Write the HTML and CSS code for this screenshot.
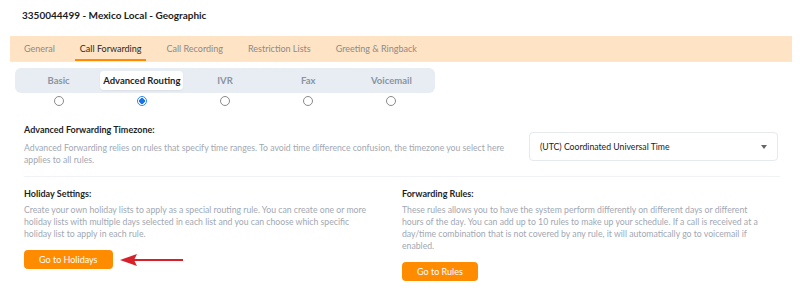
FILE: index.html
```html
<!DOCTYPE html>
<html lang="en">
<head>
    <meta charset="UTF-8">
    <title>3350044499 - Mexico Local - Geographic</title>
    <link rel="stylesheet" href="styles.css">
</head>
<body>

    <h1 class="title">3350044499 - Mexico Local - Geographic</h1>

    <nav class="tabs">
        <a href="#general">General</a>
        <a href="#forwarding" class="active">Call Forwarding</a>
        <a href="#recording">Call Recording</a>
        <a href="#restriction">Restriction Lists</a>
        <a href="#greeting">Greeting &amp; Ringback</a>
    </nav>

    <div class="modes">
        <div class="segments">
            <span>Basic</span>
            <span class="active">Advanced Routing</span>
            <span>IVR</span>
            <span>Fax</span>
            <span>Voicemail</span>
        </div>
        <div class="radios">
            <span><i class="radio"></i></span>
            <span><i class="radio checked"></i></span>
            <span><i class="radio"></i></span>
            <span><i class="radio"></i></span>
            <span><i class="radio"></i></span>
        </div>
    </div>

    <div class="content">
        <div class="timezone">
            <div class="timezone-text">
                <h3>Advanced Forwarding Timezone:</h3>
                <p>Advanced Forwarding relies on rules that specify time ranges. To avoid time difference confusion, the timezone you select here applies to all rules.</p>
            </div>
            <div class="select">
                <span>(UTC) Coordinated Universal Time</span>
                <i class="caret"></i>
            </div>
        </div>

        <div class="columns">
            <div class="col col-holiday">
                <h3>Holiday Settings:</h3>
                <p>Create your own holiday lists to apply as a special routing rule. You can create one or more holiday lists with multiple days selected in each list and you can choose which specific holiday list to apply in each rule.</p>
                <div class="action">
                    <button class="btn">Go to Holidays</button>
                    <svg class="arrow" width="64" height="14" viewBox="0 0 64 14">
                        <line x1="14" y1="7" x2="63" y2="7" stroke="#d8202b" stroke-width="2"/>
                        <polygon points="0,7 17,1 14,7 17,13" fill="#d8202b"/>
                    </svg>
                </div>
            </div>
            <div class="col">
                <h3>Forwarding Rules:</h3>
                <p>These rules allows you to have the system perform differently on different days or different hours of the day. You can add up to 10 rules to make up your schedule. If a call is received at a day/time combination that is not covered by any rule, it will automatically go to voicemail if enabled.</p>
                <div class="action">
                    <button class="btn">Go to Rules</button>
                </div>
            </div>
        </div>
    </div>

</body>
</html>
```
FILE: styles.css
```css
body {
    margin: 0;
    font-family: 'Lato', 'Liberation Sans', sans-serif;
    background-color: #ffffff;
    color: #222;
}
.title {
    margin: 0;
    height: 36px;
    padding: 0 0 0 22px;
    line-height: 31px;
    font-size: 10px;
    font-weight: bold;
    color: #1c1c1c;
}
.tabs {
    margin: 0 8px 0 10px;
    height: 25px;
    background-color: #fee3c4;
    border-bottom: 1px solid #e6ecf3;
    display: flex;
    gap: 15px;
    padding-left: 9px;
}
.tabs a {
    color: #8b8b8b;
    text-decoration: none;
    font-size: 9px;
    line-height: 25px;
    padding: 0 5px;
    border-bottom: 2px solid transparent;
    height: 23px;
}
.tabs a.active {
    color: #2a2a2a;
    border-bottom-color: #ff8c00;
}
.modes {
    margin: 6px 0 0 15px;
    width: 420px;
}
.segments {
    display: flex;
    background-color: #e8edf3;
    border-radius: 6px;
    padding: 3px 2px;
    height: 19px;
}
.segments span {
    flex: 1;
    text-align: center;
    font-size: 9.5px;
    line-height: 19px;
    color: #8a94a2;
    font-weight: bold;
    border-radius: 4px;
}
.segments span.active {
    background-color: #ffffff;
    color: #1f1f1f;
    box-shadow: 0 1px 2px rgba(0, 0, 0, 0.06);
}
.radios {
    display: flex;
    padding: 0 2px;
    height: 16px;
    align-items: center;
}
.radios span {
    flex: 1;
    display: flex;
    justify-content: center;
}
.radio {
    width: 8px;
    height: 8px;
    border: 1px solid #8a8a8a;
    border-radius: 50%;
    background: #fff;
}
.radio.checked {
    border-color: #2e86f5;
    background: radial-gradient(circle, #1a73e8 0 2.6px, #fff 3px);
}
.content {
    margin: 0 20px 0 24px;
}
.timezone {
    display: flex;
    align-items: center;
    gap: 10px;
    padding: 15px 0 10px;
    border-bottom: 1px solid #f0f2f5;
}
.timezone-text {
    flex: 1;
}
.timezone h3 {
    margin-bottom: 6px;
}
h3 {
    margin: 0 0 4px;
    font-size: 9px;
    line-height: 12px;
    font-weight: bold;
    color: #1f1f1f;
}
p {
    margin: 0;
    font-size: 8.7px;
    line-height: 12px;
    color: #a1a8b3;
}
.select {
    width: 249px;
    height: 29px;
    margin: 3px 2px 0 0;
    box-sizing: border-box;
    border: 1px solid #e6e9ee;
    border-radius: 4px;
    display: flex;
    align-items: center;
    justify-content: space-between;
    padding: 0 10px 0 10px;
    font-size: 8.7px;
    color: #222;
}
.caret {
    width: 0;
    height: 0;
    border-left: 3.5px solid transparent;
    border-right: 3.5px solid transparent;
    border-top: 4px solid #666;
}
.columns {
    display: grid;
    grid-template-columns: 1fr 1fr;
    padding-top: 11px;
}
.col {
    padding-right: 12px;
}
.col-holiday {
    padding-right: 34px;
}
.action {
    display: flex;
    align-items: center;
    margin-top: 10px;
}
.btn {
    background-color: #ff8c00;
    color: #fff;
    border: none;
    border-radius: 4px;
    font-family: inherit;
    font-size: 9px;
    height: 19px;
    padding: 0 15px;
    cursor: pointer;
}
.arrow {
    margin-left: 7px;
}
```
